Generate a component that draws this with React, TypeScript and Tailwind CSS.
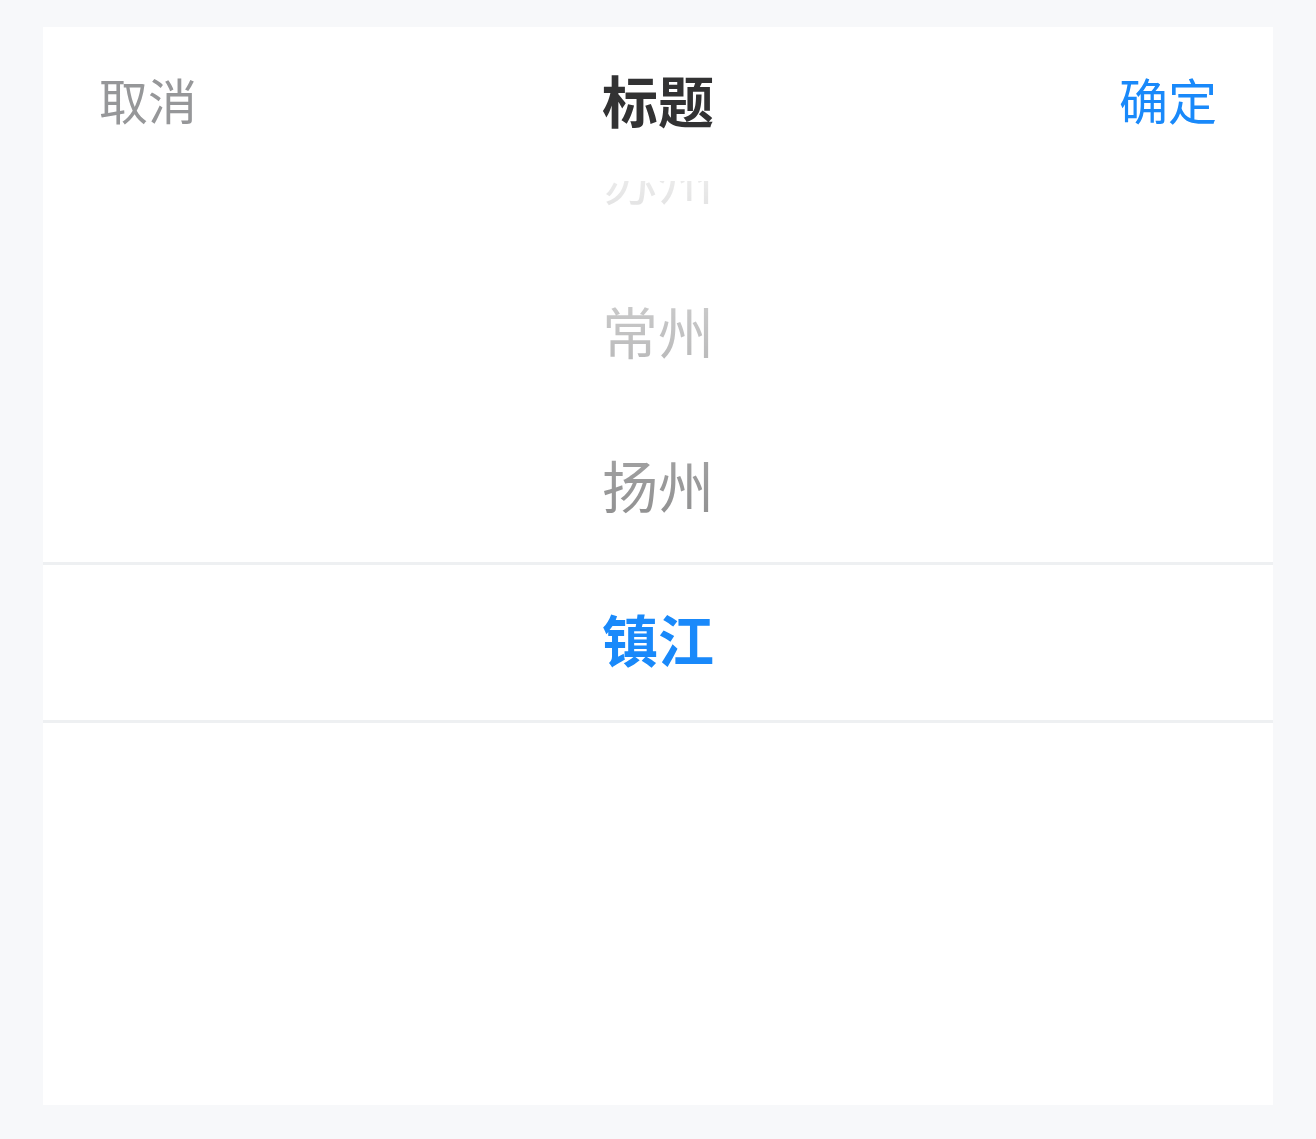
const cities = ["苏州", "常州", "扬州", "镇江"]
const selected = 3

export default function App() {
  return (
    <div className="min-h-screen bg-[#f7f8fa] px-[43px] pt-[27px] pb-[34px] font-['Noto_Sans_CJK_SC','Noto_Sans',sans-serif]">
      <div className="bg-white">
        {/* toolbar */}
        <div className="flex h-[154px] items-center justify-between pb-[10px]">
          <button className="px-[56px] text-[49px] text-[#969799]">取消</button>
          <div className="text-[56px] font-bold text-[#323233]">标题</div>
          <button className="px-[56px] text-[49px] text-[#1989fa]">确定</button>
        </div>

        {/* column */}
        <div className="relative h-[924px] overflow-hidden">
          <ul className="-translate-y-[82px]">
            {cities.map((c, i) => (
              <li
                key={c}
                className={
                  i === selected
                    ? "flex h-[154px] items-center justify-center text-[56px] font-bold text-[#1989fa]"
                    : "flex h-[154px] items-center justify-center text-[56px] text-[#323233]"
                }
              >
                {c}
              </li>
            ))}
          </ul>

          {/* fade masks */}
          <div className="pointer-events-none absolute inset-x-0 top-0 h-[385px] bg-linear-to-b from-white/90 to-white/40" />
          <div className="pointer-events-none absolute inset-x-0 bottom-0 h-[385px] bg-linear-to-t from-white/90 to-white/40" />

          {/* selection frame */}
          <div className="pointer-events-none absolute inset-x-0 top-[381px] h-[161px] border-y-[3px] border-[#eef0f2]" />
        </div>
      </div>
    </div>
  )
}
